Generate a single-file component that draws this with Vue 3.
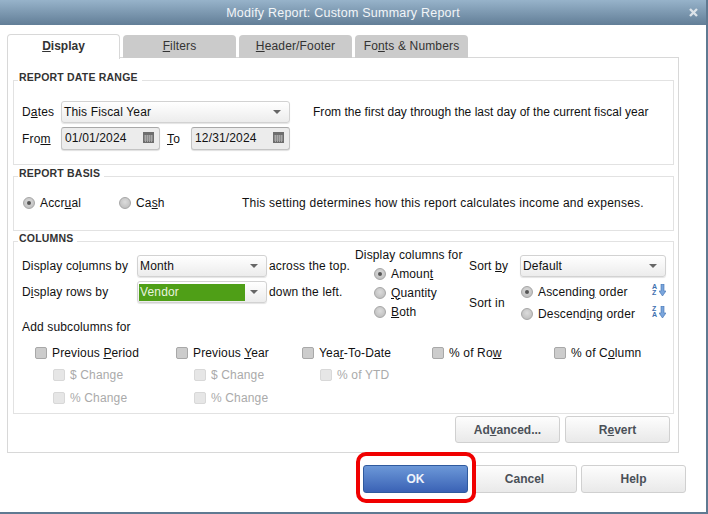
<script setup>
const subcolumns = [
  { pre: 'Previous ', key: 'P', post: 'eriod', width: 141, subs: ['$ Change', '% Change'] },
  { pre: 'Previous ', key: 'Y', post: 'ear', width: 126, subs: ['$ Change', '% Change'] },
  { pre: 'Yea', key: 'r', post: '-To-Date', width: 130, subs: ['% of YTD'] },
  { pre: '% of Ro', key: 'w', post: '', width: 122, subs: [] },
  { pre: '% of C', key: 'o', post: 'lumn', width: 100, subs: [] }
]
</script>

<template>
  <div class="window">
    <div class="titlebar">
      <span>Modify Report: Custom Summary Report</span>
      <svg class="close" width="9" height="9" viewBox="0 0 9 9">
        <path d="M1 1l7 7M8 1l-7 7" stroke="#dce3e9" stroke-width="2.400" />
      </svg>
    </div>

    <div class="tabs">
      <div class="tab active"><u>D</u>isplay</div>
      <div class="tab"><u>F</u>ilters</div>
      <div class="tab"><u>H</u>eader/Footer</div>
      <div class="tab">Fo<u>n</u>ts &amp; Numbers</div>
    </div>

    <div class="panel">
      <section class="group date-group">
        <div class="legend">REPORT DATE RANGE</div>
        <div class="row first-row">
          <label class="date-label">D<u>a</u>tes</label>
          <div class="combo dates-combo"><span>This Fiscal Year</span><i class="arrow"></i></div>
          <span class="date-desc">From the first day through the last day of the current fiscal year</span>
        </div>
        <div class="row date-row">
          <label class="date-label">Fro<u>m</u></label>
          <div class="date-field">
            <span>01/01/2024</span>
            <svg width="11" height="11" viewBox="0 0 11 11">
              <rect width="11" height="11" fill="#6e6e6e" />
              <path d="M1 4h9M1 6h9M1 8h9M2.500 3v7M4.500 3v7M6.500 3v7M8.500 3v7" stroke="#a8a8a8" stroke-width="1" />
            </svg>
          </div>
          <label class="to-label"><u>T</u>o</label>
          <div class="date-field">
            <span>12/31/2024</span>
            <svg width="11" height="11" viewBox="0 0 11 11">
              <rect width="11" height="11" fill="#6e6e6e" />
              <path d="M1 4h9M1 6h9M1 8h9M2.500 3v7M4.500 3v7M6.500 3v7M8.500 3v7" stroke="#a8a8a8" stroke-width="1" />
            </svg>
          </div>
        </div>
      </section>

      <section class="group basis-group">
        <div class="legend">REPORT BASIS</div>
        <div class="row basis-row">
          <div class="radio-item accrual"><i class="radio on"></i><span>Accr<u>u</u>al</span></div>
          <div class="radio-item cash"><i class="radio"></i><span>Ca<u>s</u>h</span></div>
          <span class="basis-desc">This setting determines how this report calculates income and expenses.</span>
        </div>
      </section>

      <section class="group columns-group">
        <div class="legend">COLUMNS</div>
        <div class="columns-top">
          <div class="by-block">
            <div class="row">
              <label class="by-label">Display co<u>l</u>umns by</label>
              <div class="combo by-combo"><span>Month</span><i class="arrow"></i></div>
              <span class="by-suffix">across the top.</span>
            </div>
            <div class="row by-second">
              <label class="by-label">D<u>i</u>splay rows by</label>
              <div class="combo by-combo vendor"><span class="vendor-value">Vendor</span><i class="arrow"></i></div>
              <span class="by-suffix">down the left.</span>
            </div>
          </div>

          <div class="for-block">
            <div class="for-title">Display columns for</div>
            <div class="for-list">
              <div class="radio-item"><i class="radio on"></i><span>Amoun<u>t</u></span></div>
              <div class="radio-item"><i class="radio"></i><span><u>Q</u>uantity</span></div>
              <div class="radio-item"><i class="radio"></i><span><u>B</u>oth</span></div>
            </div>
          </div>

          <div class="sort-block">
            <div class="row">
              <label class="sort-label">Sort <u>b</u>y</label>
              <div class="combo sort-combo"><span>Default</span><i class="arrow"></i></div>
            </div>
            <div class="row sort-second">
              <label class="sort-label">Sort in</label>
              <div class="sort-list">
                <div class="radio-item"><i class="radio on"></i><span class="sort-text">Ascendin<u>g</u> order</span>
                  <span class="az"><span class="az-letters">A<br />Z</span><svg width="7" height="12" viewBox="0 0 7 12"><path d="M2 0h3v7h2l-3.500 5L0 7h2z" fill="#7aa5dc" stroke="#3f70b0" stroke-width=".6" /></svg></span>
                </div>
                <div class="radio-item"><i class="radio"></i><span class="sort-text">Descend<u>i</u>ng order</span>
                  <span class="az"><span class="az-letters">Z<br />A</span><svg width="7" height="12" viewBox="0 0 7 12"><path d="M2 0h3v7h2l-3.500 5L0 7h2z" fill="#7aa5dc" stroke="#3f70b0" stroke-width=".6" /></svg></span>
                </div>
              </div>
            </div>
          </div>
        </div>

        <div class="sub-title">Add subcolumns for</div>
        <div class="sub-grid">
          <div v-for="col in subcolumns" :key="col.key" class="sub-col" :style="{ width: col.width + 'px' }">
            <div class="check-item main"><i class="check"></i><span>{{ col.pre }}<u>{{ col.key }}</u>{{ col.post }}</span></div>
            <div v-for="sub in col.subs" :key="sub" class="check-item disabled"><i class="check"></i><span>{{ sub }}</span></div>
          </div>
        </div>
      </section>

      <div class="panel-buttons">
        <button class="btn">Ad<u>v</u>anced...</button>
        <button class="btn">R<u>e</u>vert</button>
      </div>
    </div>

    <div class="footer">
      <div class="ok-wrap">
        <button class="btn ok">OK</button>
        <div class="highlight"></div>
      </div>
      <button class="btn">Cancel</button>
      <button class="btn">Help</button>
    </div>
  </div>
</template>

<style>
html,
body {
  margin: 0;
  background: #fff;
}
</style>

<style scoped>
.window {
  width: 708px;
  height: 514px;
  box-sizing: border-box;
  border-right: 2px solid #5f7a92;
  border-bottom: 2px solid #5f7a92;
  background: #fff;
  font-family: "Liberation Sans", Arial, sans-serif;
  font-size: 12px;
  letter-spacing: 0.15px;
  color: #111;
  overflow: hidden;
}

i {
  display: block;
  flex-shrink: 0;
}

.titlebar {
  height: 25px;
  display: flex;
  align-items: center;
  justify-content: center;
  padding-right: 20px;
  box-sizing: border-box;
  position: relative;
  background: linear-gradient(#97b3ca, #627e97);
  color: #f2f5f8;
  font-size: 12.500px;
  letter-spacing: 0.22px;
}

.close {
  position: absolute;
  right: 8px;
  top: 8px;
}

.tabs {
  display: flex;
  gap: 3px;
  padding: 9px 0 0 7px;
  height: 23px;
  position: relative;
  z-index: 1;
}

.tab {
  width: 113px;
  height: 23px;
  margin-top: 1px;
  box-sizing: border-box;
  background: #cbcbcb;
  border-radius: 4px 4px 0 0;
  text-align: center;
  line-height: 22px;
  color: #333;
}

.tab.active {
  height: 25px;
  margin-top: 0;
  background: #fff;
  border: 1px solid #d8d8d8;
  border-bottom: none;
  font-weight: bold;
  letter-spacing: 0;
  line-height: 23px;
}

.panel {
  width: 672px;
  height: 396px;
  margin-left: 7px;
  box-sizing: border-box;
  border: 1px solid #d8d8d8;
  padding: 22px 5px 0;
}

.group {
  width: 661px;
  box-sizing: border-box;
  border: 1px solid #e2e2e2;
  padding: 0 8px;
}

.legend {
  display: table;
  margin: -10px 0 0 -4px;
  padding: 0 4px 0 1px;
  background: #fff;
  font-size: 10.500px;
  line-height: 12px;
  font-weight: bold;
  color: #333;
  letter-spacing: 0.2px;
}

.row {
  display: flex;
  align-items: center;
}

.date-group {
  height: 85px;
  margin-bottom: 11px;
}

.first-row {
  margin-top: 18px;
}

.date-row {
  margin-top: 4px;
}

.date-label {
  width: 39px;
}

.combo {
  height: 22px;
  box-sizing: border-box;
  display: flex;
  align-items: center;
  justify-content: space-between;
  padding: 0 8px 1px 2px;
  border: 1px solid #d2d2d2;
  border-radius: 3px;
  background: linear-gradient(#fff, #ececec);
  box-shadow: 0 1px 1px #e4e4e4;
}

.arrow {
  width: 0;
  height: 0;
  margin-top: 1px;
  border-left: 4px solid transparent;
  border-right: 4px solid transparent;
  border-top: 4px solid #666;
}

.dates-combo {
  width: 229px;
}

.date-desc {
  margin-left: 23px;
  letter-spacing: 0.03px;
}

.date-field {
  width: 99px;
  height: 23px;
  box-sizing: border-box;
  display: flex;
  align-items: center;
  justify-content: space-between;
  padding: 0 5px 2px 3px;
  border: 1px solid #c4c4c4;
  border-top-color: #a8a8a8;
  border-radius: 3px;
  background: #ececec;
  box-shadow: 0 1px 1px #e0e0e0;
}

.to-label {
  width: 31px;
  padding-left: 7px;
  box-sizing: border-box;
}

.basis-group {
  height: 55px;
  margin-bottom: 10px;
}

.basis-row {
  margin: 17px 0 0 1px;
}

.basis-desc {
  letter-spacing: 0.22px;
}

.radio-item {
  display: flex;
  align-items: center;
  gap: 5px;
}

.radio {
  width: 12px;
  height: 12px;
  box-sizing: border-box;
  border: 1px solid #a6a6a6;
  border-radius: 50%;
  background: radial-gradient(circle at 50% 40%, #dcdcdc, #b8b8b8);
  position: relative;
}

.radio.on::after {
  content: "";
  position: absolute;
  left: 3px;
  top: 3px;
  width: 4px;
  height: 4px;
  border-radius: 50%;
  background: #555;
}

.accrual {
  width: 96px;
}

.cash {
  width: 123px;
}

.columns-group {
  height: 173px;
  padding-right: 0;
}

.columns-top {
  display: flex;
  height: 72px;
  margin-top: 4px;
}

.by-block {
  width: 333px;
  padding-top: 7px;
}

.by-label {
  width: 115px;
}

.by-combo {
  width: 130px;
}

.by-suffix {
  margin-left: 2px;
}

.by-second {
  margin-top: 4px;
}

.vendor {
  padding-left: 1px;
}

.vendor-value {
  width: 106px;
  height: 17px;
  margin-top: 1px;
  line-height: 16px;
  padding-left: 1px;
  box-sizing: border-box;
  background: #4f9f17;
  color: #e8f2df;
}

.for-block {
  width: 114px;
}

.for-title {
  line-height: 14px;
}

.for-list {
  margin: 2px 0 0 19px;
}

.for-list .radio-item {
  height: 19px;
}

.sort-block {
  width: 197px;
  padding-top: 7px;
}

.sort-label {
  width: 51px;
}

.sort-combo {
  width: 146px;
}

.sort-second {
  margin-top: 4px;
}

.sort-list {
  width: 146px;
  padding-left: 1px;
  box-sizing: border-box;
}

.sort-list .radio-item {
  height: 22px;
}

.sort-text {
  flex: 1;
  white-space: nowrap;
}

.az {
  display: flex;
  align-items: center;
  width: 14px;
  flex-shrink: 0;
  margin-bottom: 4px;
}

.az-letters {
  width: 7px;
  font-size: 7px;
  line-height: 6px;
  font-weight: bold;
  color: #3f70b0;
  letter-spacing: 0;
}

.sub-title {
  line-height: 14px;
}

.sub-grid {
  display: flex;
  margin: 8px 0 0 13px;
}

.check-item {
  height: 23px;
  display: flex;
  align-items: center;
  gap: 5px;
  white-space: nowrap;
}

.check-item.main {
  height: 21px;
}

.check {
  width: 12px;
  height: 12px;
  box-sizing: border-box;
  border: 1px solid #a8a8a8;
  border-radius: 2px;
  background: #cccccc;
}

.check-item.disabled {
  padding-left: 18px;
  color: #aaa;
}

.disabled .check {
  border-color: #d8d8d8;
  background: #e6e6e6;
}

.panel-buttons {
  display: flex;
  gap: 5px;
  padding: 2px 0 0 442px;
}

.btn {
  width: 105px;
  height: 27px;
  padding: 0;
  border: 1px solid #d0d0d0;
  border-radius: 3px;
  background: linear-gradient(#fdfdfd, #e9e9e9);
  font-family: inherit;
  font-size: 12px;
  font-weight: bold;
  letter-spacing: 0;
  color: #4a5058;
}

.footer {
  display: flex;
  gap: 4px;
  padding: 12px 0 0 363px;
}

.ok-wrap {
  position: relative;
}

.ok {
  display: block;
  height: 28px;
  border-color: #2f5a9e;
  background: linear-gradient(#6c98d8, #3a62b5);
  color: #eef3fb;
}

.footer > .btn {
  height: 28px;
}

.highlight {
  position: absolute;
  left: -7px;
  top: -13px;
  width: 120px;
  height: 51px;
  box-sizing: border-box;
  border: 4px solid #f00000;
  border-radius: 10px;
}
</style>
